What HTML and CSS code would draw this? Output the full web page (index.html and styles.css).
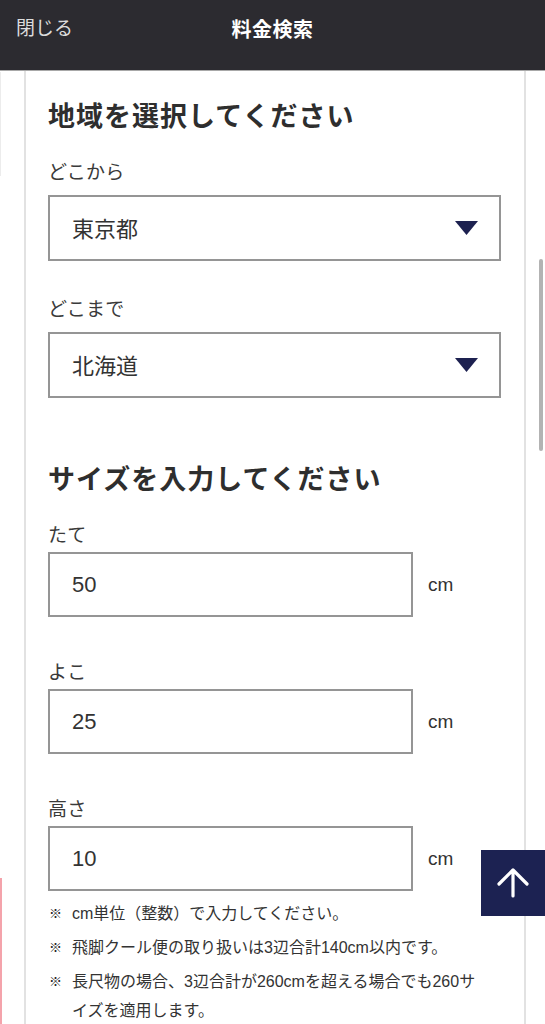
FILE: index.html
```html
<!DOCTYPE html>
<html lang="ja">
<head>
<meta charset="utf-8">
<title>料金検索</title>
<link rel="stylesheet" href="styles.css">
</head>
<body>
<div class="bg-line bg-line-gray"></div>
<div class="bg-line bg-line-pink"></div>
<header class="topbar">
  <div class="topbar-row">
    <span class="close">閉じる</span>
    <span class="title">料金検索</span>
  </div>
</header>
<main class="sheet">
  <h2 class="heading first">地域を選択してください</h2>
  <div class="field">
    <div class="label">どこから</div>
    <div class="select"><span>東京都</span><svg class="caret" width="23" height="14" viewBox="0 0 23 14"><polygon points="0,0 23,0 11.5,14" fill="#1d2150"/></svg></div>
  </div>
  <div class="field field-gap">
    <div class="label">どこまで</div>
    <div class="select"><span>北海道</span><svg class="caret" width="23" height="14" viewBox="0 0 23 14"><polygon points="0,0 23,0 11.5,14" fill="#1d2150"/></svg></div>
  </div>

  <h2 class="heading second">サイズを入力してください</h2>
  <div class="size-field">
    <div class="label">たて</div>
    <div class="input-row"><input class="num" type="text" value="50"><span class="unit">cm</span></div>
  </div>
  <div class="size-field next">
    <div class="label">よこ</div>
    <div class="input-row"><input class="num" type="text" value="25"><span class="unit">cm</span></div>
  </div>
  <div class="size-field next">
    <div class="label">高さ</div>
    <div class="input-row"><input class="num" type="text" value="10"><span class="unit">cm</span></div>
  </div>
  <ul class="notes">
    <li><span class="mark">※</span><span class="note-text">cm単位（整数）で入力してください。</span></li>
    <li><span class="mark">※</span><span class="note-text">飛脚クール便の取り扱いは3辺合計140cm以内です。</span></li>
    <li><span class="mark">※</span><span class="note-text">長尺物の場合、3辺合計が260cmを超える場合でも260サイズを適用します。</span></li>
  </ul>
</main>
<div class="scrollbar"></div>
<button class="to-top" type="button" aria-label="ページトップへ">
  <svg width="34" height="30" viewBox="0 0 34 30"><path d="M17 28 V3 M3 16 L17 2 L31 16" fill="none" stroke="#fff" stroke-width="3.2" stroke-linecap="round" stroke-linejoin="round"/></svg>
</button>
</body>
</html>
```
FILE: styles.css
```css
* { box-sizing: border-box; }
html, body { margin: 0; padding: 0; }
body {
  width: 545px;
  height: 1024px;
  overflow: hidden;
  background: #fff;
  font-family: "Liberation Sans", "Noto Sans CJK JP", sans-serif;
  color: #333;
  position: relative;
}
.topbar {
  height: 71px;
  background: #2c2b30;
  border-bottom: 1px solid #a8a8a8;
}
.topbar-row {
  position: relative;
  height: 56px;
  display: flex;
  align-items: center;
  justify-content: center;
}
.close {
  position: absolute;
  left: 16px;
  top: 0;
  line-height: 58px;
  font-size: 19px;
  color: #dcdcdc;
}
.title {
  font-size: 20px;
  font-weight: bold;
  color: #fff;
  letter-spacing: 0.5px;
}
.sheet {
  margin-left: 24px;
  width: 502px;
  min-height: 953px;
  border-left: 2px solid #e2e2e2;
  border-right: 2px solid #e2e2e2;
  padding: 26px 23px 0 22px;
}
.heading {
  margin: 0;
  font-size: 27px;
  line-height: 40px;
  font-weight: bold;
  letter-spacing: 1px;
  color: #2e2e2e;
}
.heading.second { margin-top: 62px; }
.field { margin-top: 23px; }
.field.field-gap { margin-top: 36px; }
.label {
  font-size: 19px;
  line-height: 26px;
  color: #3a3a3a;
  letter-spacing: 0.3px;
}
.select {
  margin-top: 9px;
  height: 66px;
  border: 2px solid #959595;
  display: flex;
  align-items: center;
  justify-content: space-between;
  padding: 0 21px 2px 22px;
  font-size: 22px;
  color: #333;
}
.caret { display: block; margin-top: 2px; }
.size-field { margin-top: 23px; }
.size-field.next { margin-top: 43px; }
.input-row {
  margin-top: 3px;
  display: flex;
  align-items: center;
}
.num {
  width: 365px;
  height: 65px;
  border: 2px solid #959595;
  border-radius: 0;
  padding: 0 22px;
  font-family: "Liberation Sans", "Noto Sans CJK JP", sans-serif;
  font-size: 22px;
  color: #333;
  background: #fff;
  outline: none;
}
.unit {
  margin-left: 15px;
  font-size: 19px;
  color: #333;
}
.notes {
  list-style: none;
  margin: 8px 0 0 0;
  padding: 0;
}
.notes li {
  display: flex;
  font-size: 16px;
  line-height: 29px;
  color: #333;
  margin-bottom: 5px;
  padding-right: 16px;
}
.mark {
  flex: 0 0 24px;
  font-size: 13px;
  padding-left: 1px;
  color: #222;
}
.bg-line {
  position: absolute;
  left: 0;
  width: 2px;
}
.bg-line-gray { top: 72px; height: 104px; background: #ececec; width: 1px; }
.bg-line-pink { top: 878px; height: 146px; background: #f4a3ab; }
.scrollbar {
  position: absolute;
  left: 539px;
  top: 259px;
  width: 4px;
  height: 192px;
  border-radius: 2px;
  background: #b3b3b3;
}
.to-top {
  position: absolute;
  left: 481px;
  top: 850px;
  width: 64px;
  height: 66px;
  border: 0;
  padding: 0;
  background: #1c2252;
  display: flex;
  align-items: center;
  justify-content: center;
}
```
